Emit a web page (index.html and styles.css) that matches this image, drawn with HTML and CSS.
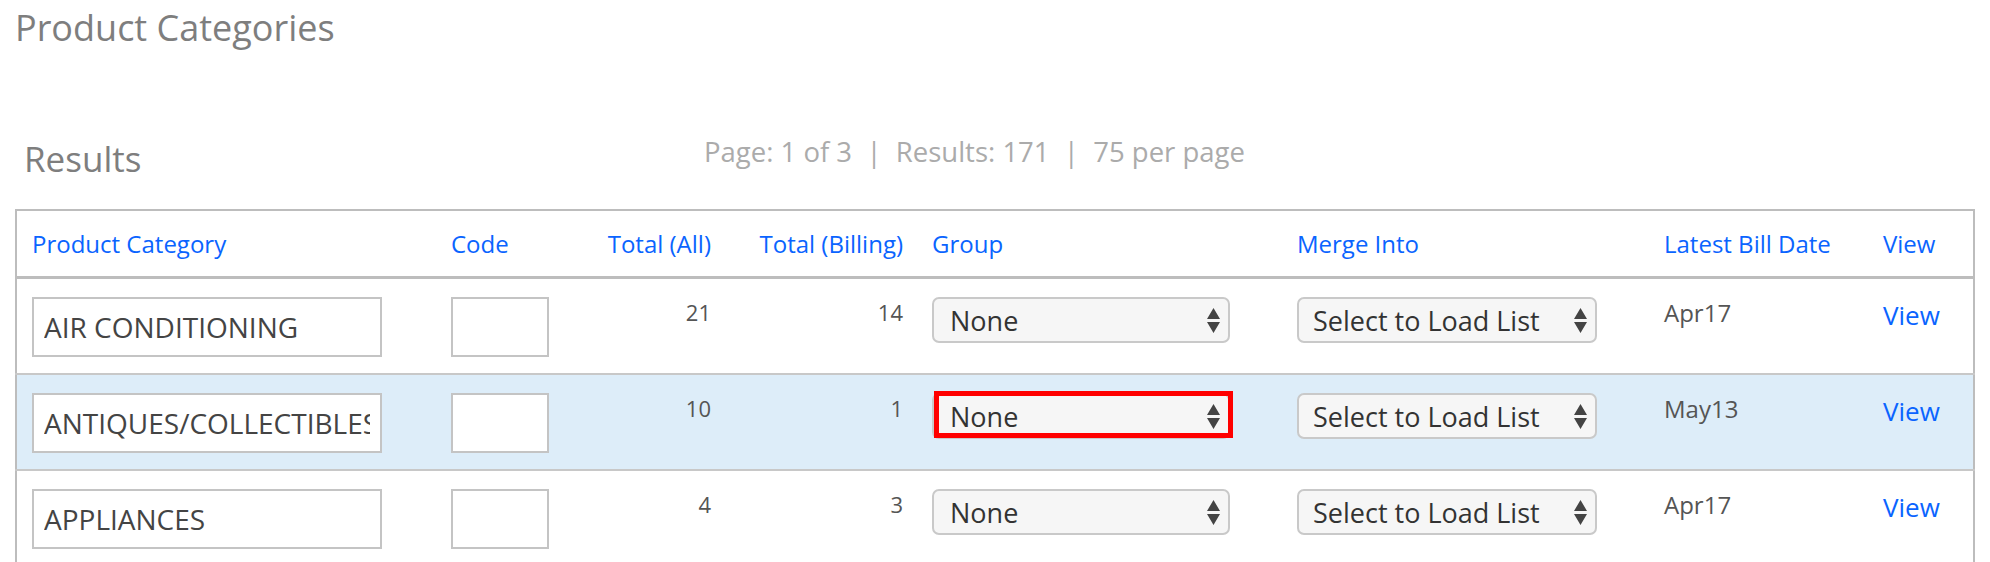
FILE: index.html
```html
<!DOCTYPE html>
<html lang="en">
<head>
<meta charset="utf-8">
<title>Product Categories</title>
<link rel="stylesheet" href="styles.css">
</head>
<body>
<div class="page">
  <h1 class="title">Product Categories</h1>
  <div class="results-bar">
    <h2 class="results">Results</h2>
    <div class="pageinfo">Page: 1 of 3 &nbsp;| &nbsp;Results: 171 &nbsp;| &nbsp;75 per page</div>
  </div>
  <table class="grid">
    <colgroup>
      <col class="c1"><col class="c2"><col class="c3"><col class="c4"><col class="c5"><col class="c6"><col class="c7"><col class="c8">
    </colgroup>
    <thead>
      <tr>
        <th>Product Category</th>
        <th>Code</th>
        <th class="num">Total (All)</th>
        <th class="num">Total (Billing)</th>
        <th>Group</th>
        <th>Merge Into</th>
        <th>Latest Bill Date</th>
        <th>View</th>
      </tr>
    </thead>
    <tbody>
      <tr>
        <td><input class="name" type="text" value="AIR CONDITIONING"></td>
        <td><input class="code" type="text" value=""></td>
        <td class="num">21</td>
        <td class="num">14</td>
        <td><div class="select"><span>None</span><svg class="arrows" viewBox="0 0 13 25" width="13" height="25"><path d="M6.5 0 L13 11 L0 11 Z M0 14 L13 14 L6.5 25 Z" fill="#444"/></svg></div></td>
        <td><div class="select merge"><span>Select to Load List</span><svg class="arrows" viewBox="0 0 13 25" width="13" height="25"><path d="M6.5 0 L13 11 L0 11 Z M0 14 L13 14 L6.5 25 Z" fill="#444"/></svg></div></td>
        <td class="date">Apr17</td>
        <td><a class="view" href="#">View</a></td>
      </tr>
      <tr class="active">
        <td><input class="name" type="text" value="ANTIQUES/COLLECTIBLES"></td>
        <td><input class="code" type="text" value=""></td>
        <td class="num">10</td>
        <td class="num">1</td>
        <td><div class="select-wrap"><div class="select"><span>None</span><svg class="arrows" viewBox="0 0 13 25" width="13" height="25"><path d="M6.5 0 L13 11 L0 11 Z M0 14 L13 14 L6.5 25 Z" fill="#444"/></svg></div><span class="mark"></span></div></td>
        <td><div class="select merge"><span>Select to Load List</span><svg class="arrows" viewBox="0 0 13 25" width="13" height="25"><path d="M6.5 0 L13 11 L0 11 Z M0 14 L13 14 L6.5 25 Z" fill="#444"/></svg></div></td>
        <td class="date">May13</td>
        <td><a class="view" href="#">View</a></td>
      </tr>
      <tr>
        <td><input class="name" type="text" value="APPLIANCES"></td>
        <td><input class="code" type="text" value=""></td>
        <td class="num">4</td>
        <td class="num">3</td>
        <td><div class="select"><span>None</span><svg class="arrows" viewBox="0 0 13 25" width="13" height="25"><path d="M6.5 0 L13 11 L0 11 Z M0 14 L13 14 L6.5 25 Z" fill="#444"/></svg></div></td>
        <td><div class="select merge"><span>Select to Load List</span><svg class="arrows" viewBox="0 0 13 25" width="13" height="25"><path d="M6.5 0 L13 11 L0 11 Z M0 14 L13 14 L6.5 25 Z" fill="#444"/></svg></div></td>
        <td class="date">Apr17</td>
        <td><a class="view" href="#">View</a></td>
      </tr>
    </tbody>
  </table>
</div>
</body>
</html>
```

FILE: styles.css
```css
html, body {
  margin: 0;
  padding: 0;
  background: #ffffff;
}

body {
  font-family: "Open Sans", "Noto Sans", sans-serif;
  color: #555555;
}

.page {
  padding: 10px 16px 0 15px;
}

.title {
  margin: 0;
  font-size: 36px;
  line-height: 1;
  font-weight: 400;
  color: #7e7e7e;
}

.results-bar {
  display: flex;
  align-items: flex-start;
  margin-top: 92px;
  height: 39px;
}

.results {
  margin: 0;
  padding: 3px 0 0 9px;
  width: 680px;
  font-size: 35px;
  line-height: 1;
  font-weight: 400;
  color: #7e7e7e;
}

.pageinfo {
  font-size: 27.5px;
  line-height: 1;
  color: #ababab;
  white-space: nowrap;
}

.grid {
  margin-top: 32px;
  width: 1958px;
  table-layout: fixed;
  border-collapse: collapse;
  border: 2px solid #bdbdbd;
}

.c1 { width: 420px; }
.c2 { width: 130px; }
.c3 { width: 159px; }
.c4 { width: 192px; }
.c5 { width: 365px; }
.c6 { width: 367px; }
.c7 { width: 219px; }
.c8 { width: 106px; }

.grid th {
  height: 65px;
  padding: 0 14px 0 15px;
  text-align: left;
  vertical-align: middle;
  font-size: 24px;
  font-weight: 400;
  color: #0a64ff;
  white-space: nowrap;
  border-bottom: 3px solid #bdbdbd;
}

.grid td {
  padding: 18px 14px 16px 15px;
  vertical-align: top;
  font-size: 22px;
  color: #555555;
  border-top: 2px solid #c8c8c8;
  white-space: nowrap;
}

.grid th.num,
.grid td.num {
  text-align: right;
}

.grid tr.active td {
  background: #ddedf9;
}

.name,
.code {
  display: block;
  box-sizing: border-box;
  height: 60px;
  margin: 0;
  padding: 0 10px;
  border: 2px solid #c4c4c4;
  border-radius: 0;
  background: #ffffff;
  font-family: "Open Sans", "Noto Sans", sans-serif;
  font-size: 28px;
  color: #444444;
  outline: none;
}

.name { width: 350px; }
.code { width: 98px; }

.select {
  box-sizing: border-box;
  display: flex;
  align-items: center;
  justify-content: space-between;
  width: 298px;
  height: 46px;
  padding: 0 8px 0 16px;
  border: 2px solid #c9c9c9;
  border-radius: 7px;
  background: #f6f6f6;
  font-size: 27px;
  color: #333333;
}

.select.merge {
  width: 300px;
  padding-left: 14px;
}

.arrows {
  display: block;
  flex: none;
}

.select-wrap {
  position: relative;
  width: 298px;
}

.mark {
  position: absolute;
  left: 2px;
  top: -2px;
  width: 299px;
  height: 47px;
  box-sizing: border-box;
  border: 5px solid #ff0000;
}

.grid td.date {
  font-size: 24px;
  padding-top: 17px;
}

.view {
  font-size: 26px;
  color: #0a64ff;
  text-decoration: none;
}
```
